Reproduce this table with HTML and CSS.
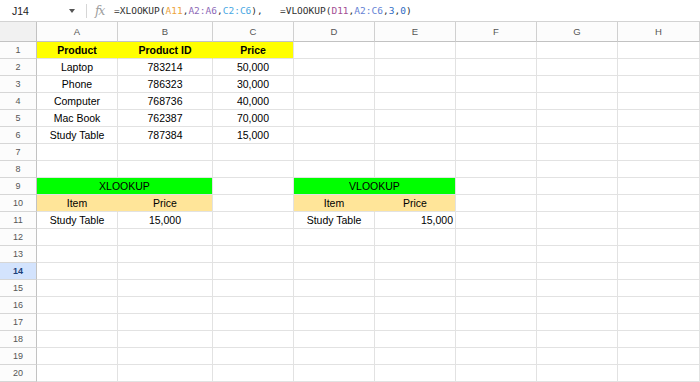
FILE: index.html
```html
<!DOCTYPE html>
<html>
<head>
<meta charset="utf-8">
<link rel="stylesheet" href="styles.css">
</head>
<body>
<div class="topbar">
  <div class="namebox"><span class="ref">J14</span><span class="caret"></span></div>
  <div class="sep"></div>
  <div class="fx">fx</div>
  <div class="formula">=XLOOKUP(<span class="f-or">A11</span>,<span class="f-pu">A2:A6</span>,<span class="f-lb">C2:C6</span>),   =VLOOKUP(<span class="f-mg">D11</span>,<span class="f-bl">A2:C6</span>,<span class="f-num">3</span>,<span class="f-num">0</span>)</div>
</div>
<div class="sheet">
  <div class="corner"></div>
  <div class="ch">A</div><div class="ch">B</div><div class="ch">C</div><div class="ch">D</div><div class="ch">E</div><div class="ch">F</div><div class="ch">G</div><div class="ch">H</div>

  <div class="rh">1</div>
  <div class="c ctr b yel">Product</div><div class="c ctr b yel">Product ID</div><div class="c ctr b yel end">Price</div><div class="c"></div><div class="c"></div><div class="c"></div><div class="c"></div><div class="c"></div>

  <div class="rh">2</div>
  <div class="c ctr">Laptop</div><div class="c ctr">783214</div><div class="c ctr">50,000</div><div class="c"></div><div class="c"></div><div class="c"></div><div class="c"></div><div class="c"></div>

  <div class="rh">3</div>
  <div class="c ctr">Phone</div><div class="c ctr">786323</div><div class="c ctr">30,000</div><div class="c"></div><div class="c"></div><div class="c"></div><div class="c"></div><div class="c"></div>

  <div class="rh">4</div>
  <div class="c ctr">Computer</div><div class="c ctr">768736</div><div class="c ctr">40,000</div><div class="c"></div><div class="c"></div><div class="c"></div><div class="c"></div><div class="c"></div>

  <div class="rh">5</div>
  <div class="c ctr">Mac Book</div><div class="c ctr">762387</div><div class="c ctr">70,000</div><div class="c"></div><div class="c"></div><div class="c"></div><div class="c"></div><div class="c"></div>

  <div class="rh">6</div>
  <div class="c ctr">Study Table</div><div class="c ctr">787384</div><div class="c ctr">15,000</div><div class="c"></div><div class="c"></div><div class="c"></div><div class="c"></div><div class="c"></div>

  <div class="rh">7</div>
  <div class="c"></div><div class="c"></div><div class="c"></div><div class="c"></div><div class="c"></div><div class="c"></div><div class="c"></div><div class="c"></div>

  <div class="rh">8</div>
  <div class="c"></div><div class="c"></div><div class="c"></div><div class="c"></div><div class="c"></div><div class="c"></div><div class="c"></div><div class="c"></div>

  <div class="rh">9</div>
  <div class="c ctr grn span2">XLOOKUP</div><div class="c"></div><div class="c ctr grn span2">VLOOKUP</div><div class="c"></div><div class="c"></div><div class="c"></div>

  <div class="rh">10</div>
  <div class="c ctr org">Item</div><div class="c ctr org end">Price</div><div class="c"></div><div class="c ctr org">Item</div><div class="c ctr org end">Price</div><div class="c"></div><div class="c"></div><div class="c"></div>

  <div class="rh">11</div>
  <div class="c ctr">Study Table</div><div class="c ctr">15,000</div><div class="c"></div><div class="c ctr">Study Table</div><div class="c right">15,000</div><div class="c"></div><div class="c"></div><div class="c"></div>

  <div class="rh">12</div>
  <div class="c"></div><div class="c"></div><div class="c"></div><div class="c"></div><div class="c"></div><div class="c"></div><div class="c"></div><div class="c"></div>

  <div class="rh">13</div>
  <div class="c"></div><div class="c"></div><div class="c"></div><div class="c"></div><div class="c"></div><div class="c"></div><div class="c"></div><div class="c"></div>

  <div class="rh sel">14</div>
  <div class="c"></div><div class="c"></div><div class="c"></div><div class="c"></div><div class="c"></div><div class="c"></div><div class="c"></div><div class="c"></div>

  <div class="rh">15</div>
  <div class="c"></div><div class="c"></div><div class="c"></div><div class="c"></div><div class="c"></div><div class="c"></div><div class="c"></div><div class="c"></div>

  <div class="rh">16</div>
  <div class="c"></div><div class="c"></div><div class="c"></div><div class="c"></div><div class="c"></div><div class="c"></div><div class="c"></div><div class="c"></div>

  <div class="rh">17</div>
  <div class="c"></div><div class="c"></div><div class="c"></div><div class="c"></div><div class="c"></div><div class="c"></div><div class="c"></div><div class="c"></div>

  <div class="rh">18</div>
  <div class="c"></div><div class="c"></div><div class="c"></div><div class="c"></div><div class="c"></div><div class="c"></div><div class="c"></div><div class="c"></div>

  <div class="rh">19</div>
  <div class="c"></div><div class="c"></div><div class="c"></div><div class="c"></div><div class="c"></div><div class="c"></div><div class="c"></div><div class="c"></div>

  <div class="rh">20</div>
  <div class="c"></div><div class="c"></div><div class="c"></div><div class="c"></div><div class="c"></div><div class="c"></div><div class="c"></div><div class="c"></div>
</div>
</body>
</html>
```
FILE: styles.css
```css
html, body {
  margin: 0;
  padding: 0;
  background: #ffffff;
  overflow: hidden;
}
body {
  width: 700px;
  height: 382px;
  font-family: "Liberation Sans", Arial, sans-serif;
  color: #000;
}
.topbar {
  display: flex;
  align-items: center;
  height: 22px;
  box-sizing: border-box;
  border-bottom: 1px solid #d3d3d3;
}
.namebox {
  width: 86px;
  display: flex;
  align-items: center;
  box-sizing: border-box;
  padding-left: 12px;
  font-size: 10.5px;
  color: #222;
}
.namebox .ref {
  flex: 1;
}
.caret {
  width: 0;
  height: 0;
  border-left: 3.5px solid transparent;
  border-right: 3.5px solid transparent;
  border-top: 4px solid #555;
  margin-right: 11px;
}
.sep {
  width: 1px;
  height: 14px;
  background: #d6d6d6;
}
.fx {
  margin-left: 8px;
  width: 13px;
  font-family: "DejaVu Serif", serif;
  font-style: italic;
  font-size: 12.5px;
  line-height: 14px;
  color: #a0a0a0;
  letter-spacing: -1.5px;
}
.formula {
  margin-left: 6px;
  font-family: "DejaVu Sans Mono", monospace;
  font-size: 9.5px;
  white-space: pre;
  color: #303030;
}
.f-or { color: #eda43c; }
.f-pu { color: #8e6ab8; }
.f-lb { color: #49a8e3; }
.f-mg { color: #a34e93; }
.f-bl { color: #6582d4; }
.f-num { color: #2f6cc4; }

.sheet {
  display: grid;
  grid-template-columns: 37px 81px 95px 81px 81px 81px 81px 81px 82px;
  grid-template-rows: 20px repeat(20, 17px);
}
.corner {
  background: #f1f1f1;
  border-right: 1px solid #c2c2c2;
  border-bottom: 1px solid #c2c2c2;
  box-sizing: border-box;
}
.ch {
  box-sizing: border-box;
  border-right: 1px solid #d0d0d0;
  border-bottom: 1px solid #c2c2c2;
  background: #fcfcfc;
  text-align: center;
  font-size: 9.5px;
  line-height: 19px;
  color: #555;
}
.rh {
  box-sizing: border-box;
  border-right: 1px solid #c2c2c2;
  border-bottom: 1px solid #d6d6d6;
  background: #fcfcfc;
  text-align: center;
  font-size: 9px;
  line-height: 16px;
  color: #555;
}
.rh.sel {
  background: #d3e3fd;
  color: #1d3f7a;
  font-weight: bold;
}
.c {
  box-sizing: border-box;
  border-right: 1px solid #e2e2e2;
  border-bottom: 1px solid #e2e2e2;
  font-size: 10.5px;
  line-height: 16px;
  padding: 0 2px;
  white-space: nowrap;
  overflow: hidden;
}
.ctr { text-align: center; }
.right { text-align: right; }
.b { font-weight: bold; }
.yel { background: #ffff00; border-right-color: #ffff00; }
.grn { background: #00ff00; }
.org { background: #ffe599; border-right-color: #ffe599; }
.end { border-right-color: #e2e2e2; }
.span2 { grid-column: span 2; }
```
